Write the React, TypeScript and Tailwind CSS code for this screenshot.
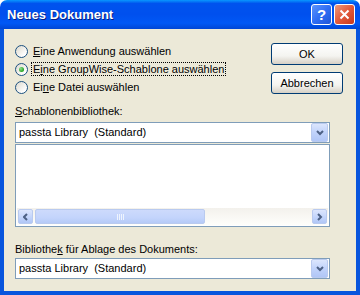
const font = "font-['Liberation_Sans',Arial,sans-serif]";

function Radio({ checked }: { checked?: boolean }) {
  return (
    <span className="relative flex h-[13px] w-[13px] shrink-0 items-center justify-center rounded-full border border-[#1C5180] bg-[linear-gradient(135deg,#DCD9CD_0%,#FFFFFF_80%)]">
      {checked && (
        <span className="h-[5px] w-[5px] rounded-full bg-[radial-gradient(circle_at_35%_35%,#8FE08F,#21A121_70%)]" />
      )}
    </span>
  );
}

function XpButton({ children }: { children: React.ReactNode }) {
  return (
    <button className="flex h-[22px] w-[72px] items-center justify-center rounded-[3px] border border-[#003C74] bg-[linear-gradient(180deg,#FFFFFF_0%,#F4F4F0_60%,#D6D0C5_100%)] text-[11px] text-black">
      {children}
    </button>
  );
}

function Chevron({ dir }: { dir: "down" | "left" | "right" }) {
  const d =
    dir === "down"
      ? "M1 1 L4 4 L7 1"
      : dir === "left"
        ? "M4 1 L1 4 L4 7"
        : "M1 1 L4 4 L1 7";
  const size = dir === "down" ? { w: 8, h: 6 } : { w: 6, h: 8 };
  return (
    <svg width={size.w} height={size.h} viewBox={dir === "down" ? "0 0 8 6" : "0 0 6 8"}>
      <path d={d} fill="none" stroke="#4D6185" strokeWidth="2" />
    </svg>
  );
}

function Combo() {
  return (
    <div className="flex h-[21px] items-center border border-[#7F9DB9] bg-white pl-[3px] pr-px">
      <span className="flex-1 text-[11px] text-black">passta Library&nbsp; (Standard)</span>
      <span className="flex h-[19px] w-[17px] items-center justify-center rounded-[2px] border border-[#B9CAEF] bg-[linear-gradient(180deg,#DCE6FD_0%,#C1D3FB_50%,#B0C6F6_100%)]">
        <Chevron dir="down" />
      </span>
    </div>
  );
}

export default function App() {
  return (
    <div className={`flex h-[295px] w-[360px] flex-col ${font} text-black`}>
      <div className="flex h-[29px] shrink-0 items-center rounded-t-[7px] bg-[linear-gradient(180deg,#0997FF_0%,#0053EE_12%,#0050EE_50%,#0058F5_80%,#0046D5_100%)] pl-[7px] pr-[5px]">
        <span className="flex-1 text-[13px] font-bold text-white [text-shadow:1px_1px_0_#0A1E80]">
          Neues Dokument
        </span>
        <div className="flex gap-[2px]">
          <span className="flex h-[21px] w-[21px] items-center justify-center rounded-[3px] border border-white bg-[linear-gradient(135deg,#5C94FC_0%,#2F6EF4_50%,#1E55D8_100%)] text-[15px] font-bold leading-none text-white">
            ?
          </span>
          <span className="flex h-[21px] w-[21px] items-center justify-center rounded-[3px] border border-white bg-[linear-gradient(135deg,#EE9A7C_0%,#E2593A_50%,#C8391D_100%)]">
            <svg width="11" height="11" viewBox="0 0 11 11">
              <path d="M1.5 1.5 L9.5 9.5 M9.5 1.5 L1.5 9.5" stroke="#FFFFFF" strokeWidth="2" />
            </svg>
          </span>
        </div>
      </div>

      <div className="flex flex-1 flex-col border-x-4 border-b-4 border-[#0855DD] bg-[#ECE9D8] pl-[11px] pr-[26px] text-[11px]">
        <div className="flex">
          <div className="mt-[13px] flex flex-1 flex-col">
            <label className="flex h-[18px] items-center gap-[5px]">
              <Radio />
              <span><u>E</u>ine Anwendung auswählen</span>
            </label>
            <label className="flex h-[18px] items-center gap-[3px]">
              <Radio checked />
              <span className="border border-dotted border-black px-px leading-[12px]">
                E<u>i</u>ne GroupWise-Schablone auswählen
              </span>
            </label>
            <label className="flex h-[18px] items-center gap-[5px]">
              <Radio />
              <span>Ei<u>n</u>e Datei auswählen</span>
            </label>
          </div>
          <div className="-mr-[13px] mt-[14px] flex flex-col gap-[7px]">
            <XpButton>OK</XpButton>
            <XpButton>Abbrechen</XpButton>
          </div>
        </div>

        <div className="mt-[8px] flex h-[14px] items-center">
          <span><u>S</u>chablonenbibliothek:</span>
        </div>
        <div className="mt-[4px]">
          <Combo />
        </div>
        <div className="mt-px flex h-[83px] flex-col border border-[#7F9DB9] bg-white p-px">
          <div className="flex-1" />
          <div className="flex h-[17px] items-center bg-[linear-gradient(180deg,#F3F1EC_0%,#FEFEFB_100%)] px-px">
            <span className="flex h-[15px] w-[15px] items-center justify-center rounded-[2px] border border-[#B9CAEF] bg-[linear-gradient(180deg,#DCE6FD_0%,#C1D3FB_60%,#B0C6F6_100%)]">
              <Chevron dir="left" />
            </span>
            <span className="ml-[2px] flex h-[15px] w-[170px] items-center justify-center rounded-[2px] border border-[#B9CAEF] bg-[linear-gradient(180deg,#CDDAFC_0%,#C3D4FC_60%,#B5CAF7_100%)]">
              <span className="flex gap-px">
                <span className="h-[6px] w-px bg-[#EEF4FE]" />
                <span className="h-[6px] w-px bg-[#EEF4FE]" />
                <span className="h-[6px] w-px bg-[#EEF4FE]" />
                <span className="h-[6px] w-px bg-[#EEF4FE]" />
              </span>
            </span>
            <span className="flex-1" />
            <span className="flex h-[15px] w-[15px] items-center justify-center rounded-[2px] border border-[#B9CAEF] bg-[linear-gradient(180deg,#DCE6FD_0%,#C1D3FB_60%,#B0C6F6_100%)]">
              <Chevron dir="right" />
            </span>
          </div>
        </div>

        <div className="mt-[15px] flex h-[14px] items-center">
          <span>Bibliothe<u>k</u> für Ablage des Dokuments:</span>
        </div>
        <div className="mt-[2px]">
          <Combo />
        </div>
      </div>
    </div>
  );
}
